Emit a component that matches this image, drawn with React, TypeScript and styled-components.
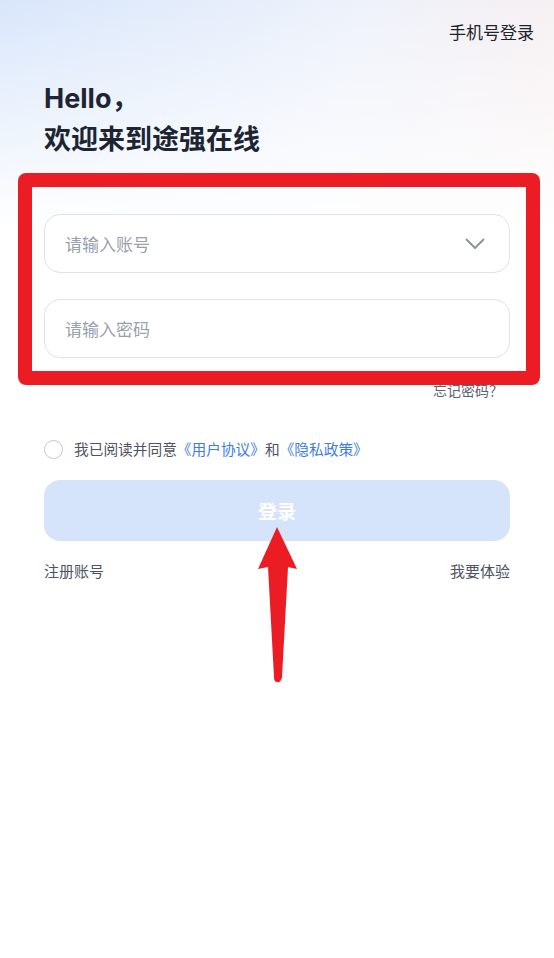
import React, { FC, useState } from "react";
import styled, { createGlobalStyle } from "styled-components";

const GlobalStyle = createGlobalStyle`
  html, body {
    margin: 0;
    padding: 0;
    background: #fff;
  }
  body {
    font-family: "Noto Sans CJK SC", "Noto Sans", sans-serif;
  }
  * {
    box-sizing: border-box;
  }
`;

const ChevronDown: FC = () => (
  <svg width="20" height="12" viewBox="0 0 20 12" fill="none">
    <path d="M1.5 1.5 L10 10 L18.5 1.5" stroke="#8a8f9c" strokeWidth="1.8" strokeLinecap="round" strokeLinejoin="round" />
  </svg>
);

const App: FC = () => {
  const [agreed, setAgreed] = useState(false);

  return (
    <Page>
      <GlobalStyle />
      <TopBar>
        <TopLink>手机号登录</TopLink>
      </TopBar>
      <Heading>
        <Hello>Hello，</Hello>
        <Welcome>欢迎来到途强在线</Welcome>
      </Heading>
      <Form>
        <Field>
          <Placeholder>请输入账号</Placeholder>
          <ChevronDown />
        </Field>
        <Field>
          <Placeholder>请输入密码</Placeholder>
        </Field>
      </Form>
      <ForgotRow>
        <Forgot>忘记密码？</Forgot>
      </ForgotRow>
      <AgreeRow onClick={() => setAgreed(!agreed)}>
        <Radio $checked={agreed} />
        <AgreeText>
          我已阅读并同意<Link>《用户协议》</Link>和<Link>《隐私政策》</Link>
        </AgreeText>
      </AgreeRow>
      <LoginButton>登录</LoginButton>
      <BottomRow>
        <Minor>注册账号</Minor>
        <Minor>我要体验</Minor>
      </BottomRow>

      {/* annotation overlay */}
      <Highlight />
      <Arrow width="60" height="160" viewBox="0 0 60 160">
        <path d="M28 0 L48 42 L39 40 L33 150 Q32 156 28 155 Q25 155 25 150 L19 40 L9 42 Z" fill="#ec1c24" />
      </Arrow>
    </Page>
  );
};

export default App;

const Page = styled.div`
  position: relative;
  min-height: 958px;
  padding: 0 44px;
  background:
    linear-gradient(180deg, rgba(255, 255, 255, 0) 0px, rgba(255, 255, 255, 0.55) 130px, #fff 230px),
    linear-gradient(100deg, #d8e6fb 0%, #eef2fb 50%, #fdeeea 100%);
  overflow: hidden;
`;

const TopBar = styled.div`
  display: flex;
  justify-content: flex-end;
  padding-top: 20px;
  margin-right: -24px;
`;

const TopLink = styled.span`
  font-size: 17px;
  line-height: 24px;
  color: #1f2329;
`;

const Heading = styled.div`
  margin-top: 36px;
  display: flex;
  flex-direction: column;
`;

const Hello = styled.div`
  font-family: "Inter", "Noto Sans CJK SC", sans-serif;
  font-weight: 700;
  font-size: 27px;
  line-height: 38px;
  color: #1d2533;
`;

const Welcome = styled.div`
  font-weight: 600;
  font-size: 27px;
  line-height: 40px;
  color: #1d2533;
`;

const Form = styled.div`
  margin-top: 56px;
  display: flex;
  flex-direction: column;
  gap: 26px;
`;

const Field = styled.div`
  height: 59px;
  border: 1px solid #dfe2e8;
  border-radius: 16px;
  background: #fff;
  display: flex;
  align-items: center;
  justify-content: space-between;
  padding: 0 24px 0 20px;
`;

const Placeholder = styled.span`
  font-size: 17px;
  color: #9a9fab;
`;

const ForgotRow = styled.div`
  display: flex;
  justify-content: flex-end;
  margin-top: 22px;
  padding-right: 7px;
`;

const Forgot = styled.span`
  font-size: 14px;
  line-height: 20px;
  color: #5c6270;
`;

const AgreeRow = styled.div`
  margin-top: 38px;
  display: flex;
  align-items: center;
  gap: 11px;
  cursor: pointer;
`;

const Radio = styled.span<{ $checked: boolean }>`
  width: 19px;
  height: 19px;
  border-radius: 50%;
  border: 1.5px solid ${(p) => (p.$checked ? "#3e7be6" : "#c3c7d1")};
  background: ${(p) => (p.$checked ? "#3e7be6" : "#fff")};
  flex: none;
`;

const AgreeText = styled.span`
  font-size: 14.7px;
  line-height: 22px;
  color: #4d5362;
`;

const Link = styled.span`
  color: #3e7be6;
`;

const LoginButton = styled.button`
  margin-top: 20px;
  width: 100%;
  height: 61px;
  border: none;
  border-radius: 16px;
  background: #d5e4fb;
  color: #fff;
  font-family: "Noto Sans CJK SC", sans-serif;
  font-size: 19px;
  font-weight: 700;
  cursor: pointer;
`;

const BottomRow = styled.div`
  margin-top: 19px;
  display: flex;
  justify-content: space-between;
`;

const Minor = styled.span`
  font-size: 15px;
  line-height: 22px;
  color: #4d5362;
`;

const Highlight = styled.div`
  position: absolute;
  left: 18px;
  top: 173px;
  width: 522px;
  height: 212px;
  border: 14px solid #ec1c24;
  border-radius: 8px;
  pointer-events: none;
`;

const Arrow = styled.svg`
  position: absolute;
  left: 249px;
  top: 527px;
  pointer-events: none;
`;
